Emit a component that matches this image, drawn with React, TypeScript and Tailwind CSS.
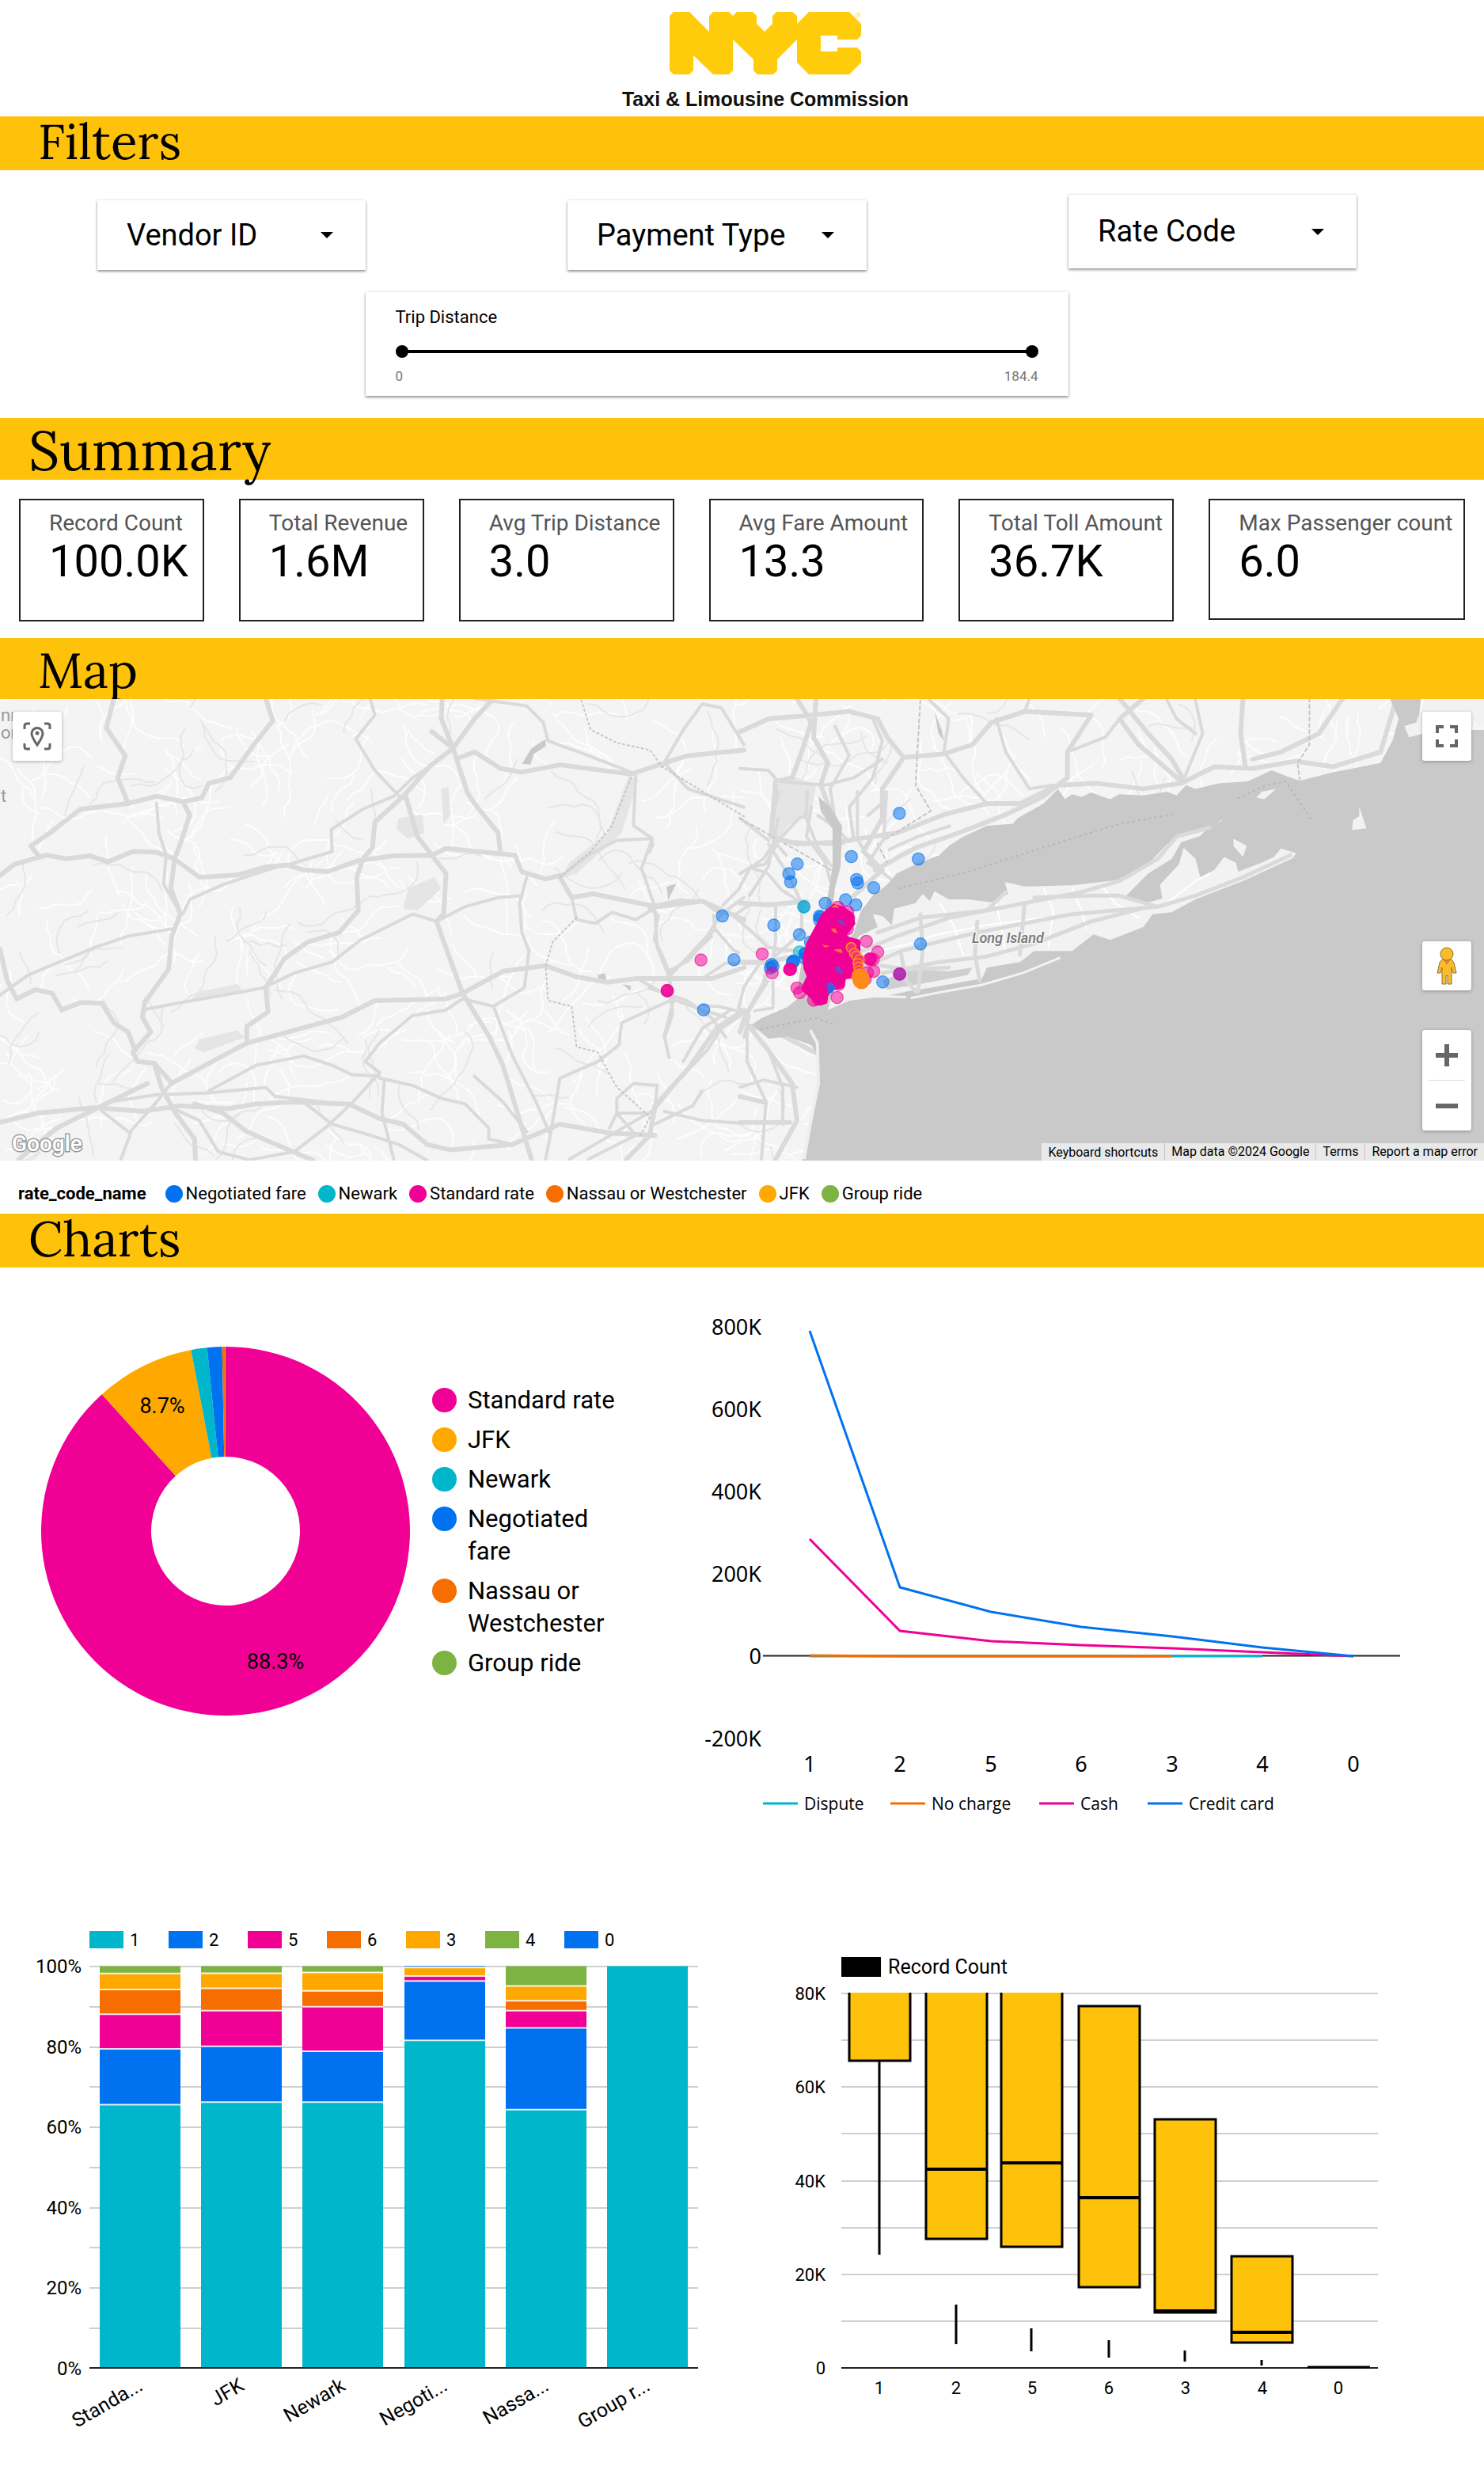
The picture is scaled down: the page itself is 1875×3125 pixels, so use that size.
import React, { useState } from "react";

const BLUE = "#0072f0";
const TEAL = "#00b6cb";
const PINK = "#f10096";
const ORANGE = "#f66d00";
const AMBER = "#ffa800";
const GREEN = "#7cb342";
const YELLOW = "#ffc20a";

function Logo() {
  return (
    <div className="flex h-[147px] flex-col items-center pt-[15px] pl-[59px]">
      <svg viewBox="0 0 242 79" className="h-[79px] w-[242px]" role="img" aria-label="NYC">
        <path
          fill="#ffcc0c"
          d="M5 0H25L50 25V5L55 0H75L80 5L85 0H105L110 5V15L120 25L130 15V5L135 0H155L161 5V15L176 0H227L242 15V30L237 35H212V30H191V50H212V45H237L242 50V64L227 79H176L161 64V35L136 60V74L131 79H111L106 74V60L80 35V74L75 79H55L30 55V74L25 79H5L0 74V5Z"
        />
        <circle cx="238" cy="4" r="3" fill="none" stroke="#ffdc5c" strokeWidth="1" />
        <circle cx="238" cy="4" r="1" fill="#ffdc5c" />
      </svg>
      <p className="mt-[15px] font-['Liberation_Sans',sans-serif] text-[25px] leading-[32px] font-bold text-[#111]">
        Taxi &amp; Limousine Commission
      </p>
    </div>
  );
}

function Filter({ label, className }: { label: string; className: string }) {
  return (
    <div className={"relative bg-white shadow-[0_2px_3px_rgba(0,0,0,0.38),0_0_3px_rgba(0,0,0,0.14)] " + className}>
      <select
        aria-label={label}
        className="h-full w-full appearance-none bg-transparent pr-16 pl-[37px] text-[38px] text-black"
      >
        <option>{label}</option>
      </select>
      <svg viewBox="0 0 16 8" className="pointer-events-none absolute top-1/2 right-[41px] -mt-1 h-2 w-4">
        <path d="M0 0H16L8 8Z" />
      </svg>
    </div>
  );
}

const RANGE =
  "pointer-events-none absolute inset-0 h-4 w-full appearance-none bg-transparent [&::-webkit-slider-thumb]:pointer-events-auto [&::-webkit-slider-thumb]:h-4 [&::-webkit-slider-thumb]:w-4 [&::-webkit-slider-thumb]:appearance-none [&::-webkit-slider-thumb]:rounded-full [&::-webkit-slider-thumb]:bg-black";

function TripDistance() {
  const [low, setLow] = useState(0);
  const [high, setHigh] = useState(184.4);
  return (
    <fieldset className="h-[131px] w-[888px] bg-white px-[38px] pt-5 shadow-[0_2px_3px_rgba(0,0,0,0.38),0_0_3px_rgba(0,0,0,0.14)]">
      <p className="text-[22px] leading-[24px]">Trip Distance</p>
      <div className="relative mt-[23px] h-4">
        <div className="absolute inset-x-2 top-[6px] h-1 bg-black" />
        <input
          type="range"
          aria-label="Minimum trip distance"
          min={0}
          max={184.4}
          step={0.1}
          value={low}
          onChange={(e) => setLow(Math.min(Number(e.target.value), high))}
          className={RANGE}
        />
        <input
          type="range"
          aria-label="Maximum trip distance"
          min={0}
          max={184.4}
          step={0.1}
          value={high}
          onChange={(e) => setHigh(Math.max(Number(e.target.value), low))}
          className={RANGE}
        />
      </div>
      <div className="mt-[13px] flex justify-between text-[17px] leading-[20px] text-[#757575]">
        <span>{low}</span>
        <span>{high}</span>
      </div>
    </fieldset>
  );
}

function Card({ label, value, short }: { label: string; value: string; short?: boolean }) {
  return (
    <div className={"border-2 border-[#222] pt-[13px] pl-[36px] " + (short ? "h-[153px]" : "h-[155px]")}>
      <p className="text-[28px] leading-[32px] whitespace-nowrap text-[#555]">{label}</p>
      <p className="text-[56px] leading-[64px]">{value}</p>
    </div>
  );
}

function Band({ title, className }: { title: string; className: string }) {
  return (
    <h2 className={"flex items-center bg-[#ffc20a] font-['Lora','Liberation_Serif',serif] leading-none " + className}>
      {title}
    </h2>
  );
}

/* ---------- Map ---------- */

const WEST_MAJOR = [
  "M240 5L224 85L264 160L248 220L270 290",
  "M0 485L30 455L98 430L140 440L190 432L228 448L280 420L330 422L368 440L420 490L500 484L560 462L605 457L640 470L690 475L755 445L830 432L910 430L940 412L1085 430L1100 475L1150 495L1180 485",
  "M65 405L80 430M65 405L110 365L170 305L270 290L330 270L385 285L400 320L380 400L368 440",
  "M368 440L360 520L380 590L362 650L355 740L305 830L300 870L318 910L280 965L290 990L325 995L360 1045",
  "M385 285L425 275L440 235L485 220L535 130L575 65L560 5",
  "M0 685L15 770L35 820L75 795L110 805L130 850L170 830L215 832L240 885L270 910L285 960",
  "M0 1155L80 1130L200 1115L300 1125L380 1110L480 1118L540 1105L620 1100L735 1105L800 1145L850 1160L900 1215L950 1230L1080 1215L1180 1160L1290 1185L1380 1190",
  "M360 1050L440 995L520 940L620 905L720 870L790 825L940 820L975 805L1060 745L1150 730L1215 760L1280 775L1340 765L1500 765L1568 735",
  "M520 940L520 895L565 855L560 790L600 710L650 665L715 640L755 580L752 490L765 440L785 410L790 340L850 270L905 190L955 140L930 60L932 5",
  "M855 270L880 380L910 430L940 480L935 590L920 610L945 700L975 805L1030 920L1060 1000L1100 1170L1120 1255",
  "M910 95L955 140L985 260L1000 290L1050 370L1055 425",
  "M955 140L1000 60L1040 5",
  "M970 165L1000 150L1055 195L1100 205L1180 185L1330 210L1400 180L1450 160L1568 145",
  "M1180 490L1205 545L1250 535L1385 570L1480 555L1568 605",
  "M1568 850L1510 900L1450 1010L1380 1110L1370 1190L1320 1255",
  "M410 1105L470 1130L520 1180L600 1225L660 1258",
  "M310 1050L215 1110L120 1170L40 1255",
  "M325 995L340 1060L370 1130L410 1200L412 1255",
];

const WEST_MINOR = [
  "M330 290L335 370L350 430L345 510L375 575",
  "M700 420L698 360L765 305L830 270L870 220L905 190",
  "M605 457L700 420",
  "M780 5L790 50L750 115L790 200L845 275",
  "M975 820L1040 840L1080 975L1130 1100L1160 1190L1150 1255",
  "M1340 210L1335 350L1375 385L1352 465L1380 570L1385 680L1410 760L1420 820L1400 920L1410 980",
  "M1205 545L1215 605L1255 615L1290 585L1340 605L1385 570",
  "M1110 490L1095 560L1100 640L1115 690L1105 790L1040 840",
  "M920 610L980 570L1050 545L1100 540",
  "M555 790L620 750L700 720L760 660L870 590L920 610",
  "M975 820L940 850L870 865L800 940L770 990L800 1020L740 1105L690 1165L620 1235L520 1258",
  "M800 1035L870 1055L930 1090L980 1105L1030 1170L1030 1200L1080 1215",
  "M300 850L380 830L450 815L555 790",
  "M0 810L60 755L200 680L270 650L362 630",
  "M385 590L400 550L470 510L540 480L600 455",
  "M1415 820L1480 850L1530 870",
  "M1410 760L1490 650L1520 590L1568 545",
  "M1420 820L1310 885L1305 945L1260 990L1180 1035L1160 1190",
  "M1300 1130L1300 1090L1335 1050L1385 1055L1380 1130L1300 1130L1285 1170",
  "M1400 1125L1480 1150L1568 1158",
  "M1395 190L1440 90L1480 20L1520 30L1568 130",
  "M1000 5L1110 25L1145 70L1155 120L1240 160L1330 205",
  "M1180 490L1240 430L1300 390L1375 385",
  "M230 1100L330 1080L440 1075L560 1060L580 1085L720 1105",
  "M440 1070L540 1000L640 975L700 1000L740 1025L800 1030",
  "M215 1125L275 1185L255 1255",
  "M275 1180L330 1100L360 1050",
  "M370 1120L420 1150L460 1235L520 1255",
  "M1400 180L1450 250L1568 300",
  "M1350 770L1420 820M1410 750L1450 710L1500 650",
  "M1300 1130L1340 1190L1240 1255M1200 1255L1380 1120L1430 1040L1490 960L1520 900",
  "M1000 1030L1060 1100L1110 1180M810 1040L805 1130L830 1255",
  "M640 1100L700 1160L780 1190L840 1215L900 1258",
  "M1480 1070L1460 1110L1380 1160M1440 990L1480 900L1540 850",
];

const EAST_MAJOR = [
  "M0 95L60 60L150 50L230 40L290 60L310 110L345 165L430 155L490 130L530 70L600 40L740 50",
  "M160 5L155 110L185 180L170 240L200 340",
  "M120 5L150 70L130 150L110 220L75 230L65 380L120 400L200 395",
  "M200 395L330 370L430 320L520 290L590 290L670 240L750 235L850 250L930 235L1000 190L1080 195L1170 175L1250 190L1350 150L1380 20",
  "M285 470L370 410L460 370L560 320L640 270L690 220L690 150L740 50",
  "M345 165L300 250L300 330L260 420L300 470L240 540",
  "M850 5L800 60L840 130L930 230",
  "M800 5L860 100L910 170L935 225",
  "M1060 5L1055 100L1065 190",
  "M1270 5L1220 100L1140 150L1080 170",
  "M0 560L60 565L140 555",
  "M0 720L60 720L130 700",
  "M10 880L60 960L110 1050L120 1150L75 1255",
  "M15 890L90 920L165 970",
  "M0 1085L50 1100",
  "M0 1155L105 1155",
  "M0 910L10 870L50 780L60 720",
];

const EAST_MINOR = [
  "M0 195L60 200L80 230L180 240L240 220L300 170",
  "M200 80L230 160L190 250L200 330",
  "M280 60L300 120L280 220L230 300L240 390",
  "M60 400L100 480L130 560L130 640L60 720",
  "M150 300L140 380L180 450L190 500",
  "M400 10L440 60L430 150L470 220L520 290",
  "M540 60L560 150L610 250L660 240",
  "M960 10L975 100L935 225",
  "M0 330L60 390M0 480L50 440L70 400",
  "M600 40L610 5M690 150L770 110L800 60",
  "M900 10L920 60L960 100",
  "M15 890L15 990L55 1100L45 1255",
  "M60 960L90 1060L90 1160",
  "M0 1060L50 1040L120 1060",
  "M80 330L60 460L20 540",
];

const METRO_ROADS = [
  "M0 435L120 410L210 420L250 450L320 470L380 430L450 425L560 420",
  "M0 170L15 200L0 230",
  "M280 430L340 370L385 285L440 275L490 190L465 130L490 0",
  "M490 185L560 190L680 200L740 195",
  "M600 0L595 100L640 210L690 280",
  "M595 90L570 100L480 195L520 240",
  "M790 0L790 180L850 280L930 340",
  "M900 0L890 180L830 270L870 300",
  "M830 90L900 30M640 90L700 130L760 190",
  "M910 220L940 205L1020 170L1140 130",
  "M245 470L250 520L150 640L75 680L80 770L90 840L60 930",
  "M250 520L320 600L340 610",
  "M0 440L35 470L20 560L50 620L75 680",
  "M0 710L200 710L290 650L420 650L480 650",
  "M320 470L400 540L450 590L600 610",
  "M390 290L450 310L500 370L560 410",
  "M480 440L480 560L470 640L440 700",
  "M420 650L360 740L340 820L380 850L360 930",
  "M0 745L140 790L200 830L240 860L290 930",
  "M200 810L270 815L370 840L450 720",
  "M370 830L330 860L240 920M400 830L470 820L470 720",
];

const ISLAND_ROADS = [
  "M240 700L330 650L440 600L600 560L720 530L800 500L880 440L920 380L990 355",
  "M250 740L340 690L500 640L700 590L880 570L960 540L1060 490L1160 430",
  "M300 750L420 720L520 705L620 670L740 610L860 570",
  "M290 640L380 600L520 580L560 530",
  "M380 590L385 690L375 800",
  "M500 610L495 700L505 770",
  "M600 560L590 700",
  "M250 720L350 740L440 735",
  "M340 700L350 770L370 800",
  "M620 545L740 540L800 540L880 570",
];

/* Short winding local streets, the same on every render. */
function localStreets(count: number, width: number, height: number, seed: number) {
  let s = seed;
  const rnd = () => {
    s = (s * 16807) % 2147483647;
    return s / 2147483647;
  };
  const out: string[] = [];
  for (let i = 0; i < count; i++) {
    let x = rnd() * width;
    let y = rnd() * height;
    let a = rnd() * Math.PI * 2;
    let d = "M" + x.toFixed(0) + " " + y.toFixed(0);
    const steps = 4 + Math.floor(rnd() * 8);
    for (let k = 0; k < steps; k++) {
      a += (rnd() - 0.5) * 1.3;
      x += Math.cos(a) * 11;
      y += Math.sin(a) * 11;
      d += "L" + x.toFixed(0) + " " + y.toFixed(0);
    }
    out.push(d);
  }
  return out.join("");
}

const STREETS = localStreets(520, 1875, 583, 77);
const LANES = localStreets(110, 1500, 583, 4242);

const FARES: [number, number, string][] = [
  [949, 82, BLUE], [767, 246, BLUE], [1021, 255, BLUE], [562, 274, BLUE], [530, 311, BLUE],
  [537, 342, BLUE], [787, 333, BLUE], [791, 346, BLUE], [852, 364, BLUE], [745, 410, BLUE],
  [784, 429, BLUE], [668, 423, BLUE], [587, 436, BLUE], [587, 436, TEAL], [278, 471, BLUE],
  [473, 506, BLUE], [570, 542, BLUE], [646, 472, BLUE], [646, 486, BLUE], [650, 475, BLUE],
  [612, 570, BLUE], [570, 608, TEAL], [590, 615, BLUE], [594, 612, BLUE], [592, 632, BLUE],
  [322, 637, BLUE], [465, 655, BLUE], [470, 662, BLUE], [460, 668, BLUE], [543, 647, BLUE],
  [546, 645, BLUE], [548, 642, BLUE], [1029, 577, BLUE], [886, 721, BLUE], [207, 827, BLUE],
  [429, 615, PINK], [197, 638, PINK], [69, 754, PINK], [69, 754, PINK], [69, 754, PINK],
  [467, 687, PINK], [535, 672, PINK], [533, 674, PINK], [537, 673, PINK], [534, 674, PINK],
  [561, 744, PINK], [571, 762, PINK], [713, 780, PINK], [824, 567, PINK], [867, 608, PINK],
  [840, 634, PINK], [836, 634, PINK], [838, 636, PINK], [850, 636, PINK], [852, 681, PINK],
  [828, 686, PINK], [820, 710, PINK], [716, 438, PINK], [753, 456, PINK], [757, 478, PINK],
  [752, 520, PINK], [720, 730, PINK], [624, 790, PINK], [640, 786, PINK], [650, 786, PINK],
  [950, 691, PINK], [950, 691, BLUE], [950, 691, PINK],
];

const QUEENS: [number, number][] = [
  [766, 590], [778, 612], [786, 622], [798, 636], [792, 650], [794, 664], [796, 678], [800, 690],
  [798, 700], [806, 706], [802, 714], [806, 718], [804, 716],
];

function MapCanvas() {
  return (
    <svg
      viewBox="0 0 1875 583"
      preserveAspectRatio="xMidYMid slice"
      className="absolute inset-0 h-full w-full font-['Roboto',sans-serif] [&_path]:[vector-effect:non-scaling-stroke]"
      role="img"
      aria-label="Map of trips around New York City"
    >
      <rect width="1875" height="583" fill="#f4f4f4" />
      <g fill="none" strokeLinejoin="round" strokeLinecap="round">
        <path d={STREETS} stroke="#fdfdfd" strokeWidth="2" />
        <path d={LANES} stroke="#e6e6e6" strokeWidth="2" />
      </g>
      <g transform="translate(0 -3) scale(0.5995 0.4655)">
        <g fill="#e5e5e5">
          <path d="M1325 215L1345 225L1310 370L1215 480L1180 495L1200 450L1280 370Z" />
          <path d="M840 330L890 320L895 370L860 385L835 360Z" />
          <path d="M860 520L915 490L930 520L880 580L850 575Z" />
          <path d="M400 825L420 800L500 780L515 805Z" />
          <path d="M410 955L420 930L500 905L515 925L430 965Z" />
          <path d="M930 250L945 245L950 320L935 345Z" />
        </g>
        <g fill="#c9c9c9">
          <path d="M1100 182L1120 140L1150 115L1150 135L1125 155L1118 185Z" />
          <path d="M1405 515L1425 508L1408 552Z" />
          <path d="M1260 755L1275 750L1278 770L1262 768Z" />
          <path d="M1312 780L1330 785L1328 798Z" />
        </g>
        <g fill="none" stroke="#dadada" strokeLinejoin="round" strokeLinecap="round">
          <path d={WEST_MINOR.join("")} strokeWidth="4" />
          <path d={WEST_MAJOR.join("")} strokeWidth="6" />
          <path
            d="M1225 10L1245 90L1300 125L1370 145L1395 190L1568 325M1330 220L1290 350L1245 420L1180 490M1215 600L1165 665L1150 730L1155 825L1205 840L1215 950L1260 965L1300 1060L1370 1140L1350 1190"
            stroke="#c6c6c6"
            strokeWidth="2"
            strokeDasharray="2 4"
          />
        </g>
      </g>
      <g transform="translate(935 -3) scale(0.5995 0.4655)">
        <path d="M75 240L110 215L160 240L150 320L100 350L80 390L68 370Z" fill="#e5e5e5" />
        <g fill="none" stroke="#dadada" strokeLinejoin="round" strokeLinecap="round">
          <path d={EAST_MINOR.join("")} strokeWidth="4" />
          <path d={EAST_MAJOR.join("")} strokeWidth="6" />
          <path
            d="M380 10L370 240L402 310L290 400L310 450M0 330L110 410L205 480M1200 5L1200 130L1175 180L1180 225"
            stroke="#c6c6c6"
            strokeWidth="2"
            strokeDasharray="4 4"
          />
        </g>
      </g>
      <g transform="translate(820 117) scale(0.3333)" fill="none" stroke="#dadada" strokeLinejoin="round" strokeLinecap="round">
        <path d={METRO_ROADS.join("")} strokeWidth="4" />
      </g>
      <g transform="translate(935 -3) scale(0.5995 0.4655)">
        <g fill="#c9c9c9">
          <path d="M165 270L190 300L215 350L212 460L200 520L190 640L150 760L120 800L130 720L175 620L195 460L195 360L170 310Z" />
          <path d="M410 40L425 90L430 120L418 100Z" />
          <path d="M1370 5L1435 5L1430 70L1470 90L1568 90L1568 1262L130 1262L150 1160L168 1050L165 975L150 945L100 922L60 928L25 890L45 872L100 842L140 800L150 760L200 700L240 640L255 580L280 540L310 510L330 480L370 455L420 430L440 405L470 380L520 350L575 345L585 330L640 290L670 250L685 278L700 265L720 272L740 260L780 278L800 265L850 268L900 258L920 268L940 240L960 250L1010 235L1070 230L1120 200L1150 215L1180 228L1250 205L1350 180L1375 120L1388 60Z" />
        </g>
        <g fill="#f2f2f2">
          <path d="M1445 5H1568V75L1530 60L1500 90L1440 100L1410 110L1400 80L1425 70Z" />
          <path d="M235 700L250 650L290 625L280 590L300 595L320 620L325 575L370 560L385 535L400 555L410 528L440 550L480 550L530 558L565 535L558 503L600 515L700 512L780 500L820 492L860 455L900 400L950 365L990 350L970 378L930 395L910 440L860 480L810 545L850 562L890 548L885 510L925 455L935 410L960 440L970 490L1000 470L1020 435L1045 450L1050 475L1100 450L1125 435L1140 412L1172 425L1165 438L1060 500L960 550L910 585L870 590L850 625L780 660L745 645L700 690L620 690L590 720L520 735L510 765L400 790L350 800L310 812L230 825L185 850L200 780Z" />
          <path d="M1305 298L1312 325L1320 357L1290 362L1292 335L1305 325Z" />
          <path d="M1130 250L1105 278L1088 274L1100 258Z" />
          <path d="M1040 385L1068 405L1060 435L1040 405Z" />
          <path d="M1020 332L1005 345L1012 336Z" />
        </g>
        <path d="M675 708L600 748L510 782L430 800L360 818M350 815L275 812" fill="none" stroke="#f2f2f2" strokeWidth="3" />
        <path d="M148 905L163 940L165 1050L148 1160L135 1255" fill="none" stroke="#eeeeee" strokeWidth="4" />
        <path d="M300 770L360 740L440 745L490 735L480 755L400 775L310 795Z" fill="#cfcfcf" />
        <g fill="none" strokeLinejoin="round" strokeLinecap="round">
          <path
            d="M290 690L360 670L430 640M420 560L450 620L470 700M540 560L550 620L560 700M640 520L660 580L650 680M700 520L720 580L730 630M760 510L790 560L840 600M900 560L960 500L990 480M400 650L520 620L640 600"
            stroke="#ffffff"
            strokeWidth="2"
          />
          <path d={ISLAND_ROADS.join("")} stroke="#dadada" strokeWidth="5" />
          <path
            d="M335 520L480 475L650 405L800 345L915 318M1050 275L1110 240L1150 230L1205 335M45 902L160 872L200 890"
            stroke="#b4b4b4"
            strokeWidth="2"
            strokeDasharray="1 6"
          />
        </g>
      </g>
      <g fill="#9a9a9a" fontSize="22">
        <text x="1" y="28">nn</text>
        <text x="1" y="50">ore</text>
        <text x="1" y="130">t</text>
      </g>
      <g transform="translate(820 117) scale(0.3333)">
        {FARES.map(([x, y, c], i) => (
          <circle key={i} cx={x} cy={y} r="23" fill={c} fillOpacity="0.52" stroke={c} strokeOpacity="0.6" strokeWidth="4" />
        ))}
        <path
          fill={PINK}
          stroke={PINK}
          strokeWidth="4"
          strokeLinejoin="round"
          d="M700 432L735 440L770 468L776 500L742 545L757 556L795 566L796 600L778 620L774 660L788 700L742 705L734 738L692 748L674 772L670 798L640 804L616 778L584 750L590 730L604 700L592 670L588 630L602 575L632 520L660 465Z"
        />
        <path d="M660 735L690 722L710 740L695 762L675 763Z" fill="#3f5fe0" />
        <path d="M705 665L720 660L738 690L712 685ZM712 485L735 488L745 510L725 498ZM640 735L650 720L672 730Z" fill="#7048d0" />
        <path
          d="M690 438L708 428L722 440ZM690 520L705 518L716 536L698 532ZM655 580L685 585L668 590ZM700 598L728 596L734 612L712 606ZM755 580L780 590L784 606L764 596Z"
          fill="#ff7a30"
        />
        {QUEENS.map(([x, y], i) => (
          <circle
            key={i}
            cx={x}
            cy={y}
            r={i > 7 ? 28 : 18}
            fill={i > 7 ? "#ff8a1c" : "#f2307a"}
            stroke="#ff8a1c"
            strokeWidth="5"
          />
        ))}
        <circle cx="650" cy="750" r="28" fill={PINK} />
      </g>
      <text x="1228" y="308" fontSize="18" fontStyle="italic" fontWeight="500" fill="#777" stroke="#f4f4f4" strokeWidth="3" paintOrder="stroke">
        Long Island
      </text>
      <text x="15" y="571" fontSize="28" fontWeight="500" fill="#fff" stroke="#9a9a9a" strokeWidth="3" paintOrder="stroke">
        Google
      </text>
    </svg>
  );
}

const CONTROL = "flex w-[62px] items-center justify-center rounded-[3px] bg-white shadow-[0_1px_4px_rgba(0,0,0,0.3)]";

function TripMap() {
  return (
    <section className="relative h-[583px] overflow-hidden">
      <MapCanvas />
      <button type="button" aria-label="Locate" className={"absolute top-[16px] left-[16px] h-[62px] " + CONTROL}>
        <svg viewBox="0 0 36 36" className="h-9 w-9" fill="none" stroke="#666" strokeWidth="3">
          <path d="M2 9V5Q2 2 5 2H9M27 2H31Q34 2 34 5V9M34 27V31Q34 34 31 34H27M9 34H5Q2 34 2 31V27" />
          <path d="M18 29C14 23 11 19 11 14.500A7 7 0 0 1 25 14.500C25 19 22 23 18 29Z" />
          <circle cx="18" cy="14" r="2.500" fill="#666" stroke="none" />
        </svg>
      </button>
      <div className="absolute top-[16px] right-[16px] flex flex-col items-center">
        <button type="button" aria-label="Full screen" className={"h-[62px] " + CONTROL}>
          <svg viewBox="0 0 28 28" className="h-7 w-7" fill="none" stroke="#666" strokeWidth="4">
            <path d="M2 10V2H10M18 2H26V10M26 18V26H18M10 26H2V18" />
          </svg>
        </button>
        <button type="button" aria-label="Street View" className={"mt-[228px] h-[62px] " + CONTROL}>
          <svg viewBox="0 0 26 48" className="h-12 w-[26px]" stroke="#8b6f3a" strokeWidth="1">
            <path d="M7 16H19L22 20L25 33H21L19 26V47H14V36H12V47H7V26L5 33H1L4 20Z" fill="#fbbc2c" />
            <path d="M8 16H18L13 23Z" fill="#e9812c" stroke="none" />
            <circle cx="13" cy="9" r="8" fill="#fbbc2c" />
          </svg>
        </button>
        <div className="mt-[50px] w-[62px] rounded-[3px] bg-white shadow-[0_1px_4px_rgba(0,0,0,0.3)]">
          <button type="button" aria-label="Zoom in" className="flex h-[63px] w-full items-center justify-center">
            <svg viewBox="0 0 28 28" className="h-7 w-7">
              <path d="M11 0H17V11H28V17H17V28H11V17H0V11H11Z" fill="#666" />
            </svg>
          </button>
          <div className="mx-2 h-px bg-[#ddd]" />
          <button type="button" aria-label="Zoom out" className="flex h-[63px] w-full items-center justify-center">
            <svg viewBox="0 0 28 6" className="h-[6px] w-7">
              <path d="M0 0H28V6H0Z" fill="#666" />
            </svg>
          </button>
        </div>
      </div>
      <div className="absolute right-0 bottom-0 flex h-[22px] divide-x divide-[#c4c4c4] bg-[#e9e9e9] text-[16px] leading-[21px]">
        <button type="button" className="px-2">Keyboard shortcuts</button>
        <span className="px-2">Map data ©2024 Google</span>
        <a href="#terms" className="px-2">Terms</a>
        <a href="#report" className="px-2">Report a map error</a>
      </div>
    </section>
  );
}

const MAP_LEGEND = [
  { name: "Negotiated fare", color: BLUE },
  { name: "Newark", color: TEAL },
  { name: "Standard rate", color: PINK },
  { name: "Nassau or Westchester", color: ORANGE },
  { name: "JFK", color: AMBER },
  { name: "Group ride", color: GREEN },
];

/* ---------- Charts ---------- */

const SLICES = [
  { name: "Standard rate", value: 88.3, color: PINK },
  { name: "JFK", value: 8.7, color: AMBER },
  { name: "Newark", value: 1.4, color: TEAL },
  { name: "Negotiated fare", value: 1.3, color: BLUE },
  { name: "Nassau or Westchester", value: 0.27, color: ORANGE },
  { name: "Group ride", value: 0.03, color: GREEN },
];

function Donut() {
  const c = 233;
  const inner = 94;
  let acc = 0;
  const pt = (t: number, r: number) => {
    const a = (t / 100) * Math.PI * 2;
    return (c + Math.sin(a) * r).toFixed(2) + " " + (c - Math.cos(a) * r).toFixed(2);
  };
  return (
    <div className="flex items-center gap-[28px] pl-[52px]">
      <svg viewBox="0 0 466 466" className="w-[466px] shrink-0 text-[27px]" role="img" aria-label="Trips by rate code">
        {SLICES.map((s) => {
          const a = acc;
          const b = (acc += s.value);
          const large = s.value > 50 ? 1 : 0;
          return (
            <path
              key={s.name}
              fill={s.color}
              d={`M${pt(a, c)}A${c} ${c} 0 ${large} 1 ${pt(b, c)}L${pt(b, inner)}A${inner} ${inner} 0 ${large} 0 ${pt(a, inner)}Z`}
            />
          );
        })}
        <text x="153" y="84" textAnchor="middle">8.7%</text>
        <text x="296" y="407" textAnchor="middle">88.3%</text>
      </svg>
      <ul className="flex flex-col gap-[9px] text-[31px] leading-[41px]">
        {SLICES.map((s) => (
          <li key={s.name} className="flex items-start gap-[14px]">
            <span className="mt-[5px] h-[31px] w-[31px] shrink-0 rounded-full" style={{ background: s.color }} />
            <span className="max-w-[200px]">{s.name}</span>
          </li>
        ))}
      </ul>
    </div>
  );
}

const LINE_X = [1023, 1137, 1252, 1366, 1481, 1595, 1710];

function LineChart() {
  const series = [
    { name: "Dispute", color: TEAL, x: 964, y: [2092, 2092, 2092, 2092, 2092, 2092] },
    { name: "No charge", color: ORANGE, x: 1125, y: [2091, 2092, 2092, 2092, 2092] },
    { name: "Cash", color: PINK, x: 1313, y: [1944, 2060, 2073, 2078, 2082, 2087, 2092] },
    { name: "Credit card", color: BLUE, x: 1450, y: [1681, 2005, 2036, 2055, 2067, 2081, 2092] },
  ];
  return (
    <svg viewBox="880 1601 995 739" className="w-full font-['Noto_Sans',sans-serif] text-[27px]" role="img" aria-label="Totals by payment type">
      {["800K", "600K", "400K", "200K", "0", "-200K"].map((t, i) => (
        <text key={t} x="962" y={1686 + i * 104} textAnchor="end">{t}</text>
      ))}
      {["1", "2", "5", "6", "3", "4", "0"].map((t, i) => (
        <text key={t} x={LINE_X[i]} y="2238" textAnchor="middle">{t}</text>
      ))}
      <path d="M964 2091.500H1769" stroke="#222" strokeWidth="2" />
      {series.map((s) => (
        <g key={s.name}>
          <polyline
            points={s.y.map((y, i) => LINE_X[i] + "," + y).join(" ")}
            fill="none"
            stroke={s.color}
            strokeWidth="3"
          />
          <path d={`M${s.x} 2278H${s.x + 44}`} stroke={s.color} strokeWidth="3" />
          <text x={s.x + 52} y="2286" className="font-['Open_Sans',sans-serif] text-[21px]">{s.name}</text>
        </g>
      ))}
    </svg>
  );
}

const RATE_BARS: { name: string; parts: [string, number, number][] }[] = [
  { name: "Standa...", parts: [[GREEN, 187, 208], [AMBER, 208, 253], [ORANGE, 253, 323], [PINK, 323, 421], [BLUE, 421, 579], [TEAL, 579, 1324]] },
  { name: "JFK", parts: [[GREEN, 187, 207], [AMBER, 207, 250], [ORANGE, 250, 313], [PINK, 313, 414], [BLUE, 414, 572], [TEAL, 572, 1324]] },
  { name: "Newark", parts: [[GREEN, 187, 205], [AMBER, 205, 257], [ORANGE, 257, 302], [PINK, 302, 428], [BLUE, 428, 572], [TEAL, 572, 1324]] },
  { name: "Negoti...", parts: [[BLUE, 187, 191], [AMBER, 191, 215], [PINK, 215, 229], [BLUE, 229, 397], [TEAL, 397, 1324]] },
  { name: "Nassa...", parts: [[GREEN, 187, 243], [AMBER, 243, 285], [ORANGE, 285, 313], [PINK, 313, 362], [BLUE, 362, 593], [TEAL, 593, 1324]] },
  { name: "Group r...", parts: [[TEAL, 187, 1324]] },
];

function StackedBars() {
  const legend: [string, string][] = [["1", TEAL], ["2", BLUE], ["5", PINK], ["6", ORANGE], ["3", AMBER], ["4", GREEN], ["0", BLUE]];
  const toY = (v: number) => 2400 + v / 2.24;
  return (
    <svg viewBox="0 2340 940 785" className="w-full text-[24px]" role="img" aria-label="Passenger count share by rate code">
      {legend.map(([t, c], i) => (
        <g key={t}>
          <rect x={113 + i * 100} y="2439" width="43" height="22" fill={c} />
          <text x={164 + i * 100} y="2458" className="text-[22px]">{t}</text>
        </g>
      ))}
      {Array.from({ length: 10 }, (_, i) => (
        <path key={i} d={`M113 ${2484 + Math.round(i * 50.75)}H882`} stroke="#cfcfcf" strokeWidth="2" />
      ))}
      {["100%", "80%", "60%", "40%", "20%", "0%"].map((t, i) => (
        <text key={t} x="103" y={2492 + Math.round(i * 101.5)} textAnchor="end">{t}</text>
      ))}
      {RATE_BARS.map((b, i) => {
        const x = 126 + Math.round(i * 128.2);
        return (
          <g key={b.name}>
            {b.parts.map(([c, a, z], k) => (
              <rect key={k} x={x} y={toY(a)} width="102" height={toY(z) - toY(a)} fill={c} />
            ))}
            {b.parts.slice(1).map(([, a], k) => (
              <path key={k} d={`M${x} ${toY(a)}h102`} stroke="#fff" strokeOpacity="0.85" strokeWidth="2" />
            ))}
            <text transform={`translate(${x + 56} 3018) rotate(-30)`} textAnchor="end" className="text-[25px]">{b.name}</text>
          </g>
        );
      })}
      <path d="M113 2991H882" stroke="#222" strokeWidth="2" />
    </svg>
  );
}

function BoxPlot() {
  const boxes = [
    { x: 1073, top: 2500, bottom: 2603, mid: 0, w: [2603, 2848] },
    { x: 1170, top: 2500, bottom: 2828, mid: 2740, w: [2911, 2961] },
    { x: 1265, top: 2500, bottom: 2838, mid: 2732, w: [2941, 2970] },
    { x: 1363, top: 2534, bottom: 2889, mid: 2776, w: [2956, 2978] },
    { x: 1459, top: 2677, bottom: 2921, mid: 2919, w: [2969, 2983] },
    { x: 1556, top: 2850, bottom: 2959, mid: 2946, w: [2981, 2988] },
  ];
  return (
    <svg viewBox="940 2340 935 785" className="w-full text-[22px]" role="img" aria-label="Record count by passenger count">
      <clipPath id="plot">
        <rect x="1062" y="2517" width="680" height="480" />
      </clipPath>
      <rect x="1063" y="2472" width="50" height="25" />
      <text x="1122" y="2493" className="text-[25px]">Record Count</text>
      {Array.from({ length: 8 }, (_, i) => (
        <path key={i} d={`M1063 ${2518 + Math.round(i * 59.15)}H1741`} stroke="#cfcfcf" strokeWidth="2" />
      ))}
      {["80K", "60K", "40K", "20K", "0"].map((t, i) => (
        <text key={t} x="1043" y={2526 + Math.round(i * 118.3)} textAnchor="end">{t}</text>
      ))}
      {["1", "2", "5", "6", "3", "4", "0"].map((t, i) => (
        <text key={t} x={1111 + Math.round(i * 96.7)} y="3024" textAnchor="middle">{t}</text>
      ))}
      <path d="M1063 2991H1741" stroke="#222" strokeWidth="2" />
      <path d="M1652 2990H1731" stroke="#000" strokeWidth="3" />
      <g clipPath="url(#plot)" stroke="#000" strokeWidth="3">
        {boxes.map((b) => (
          <g key={b.x}>
            <path d={`M${b.x + 38} ${b.w[0]}V${b.w[1]}`} />
            <rect x={b.x} y={b.top} width="77" height={b.bottom - b.top} fill={YELLOW} />
            {b.mid > 0 && <path d={`M${b.x} ${b.mid}h77`} strokeWidth="4" />}
          </g>
        ))}
      </g>
    </svg>
  );
}

export default function App() {
  return (
    <main className="overflow-hidden bg-white font-['Roboto',sans-serif] text-black">
      <Logo />
      <Band title="Filters" className="h-[68px] pb-1 pl-[48px] text-[62px]" />
      <section className="pt-[31px] pb-7">
        <div className="flex h-[95px] items-end justify-between pr-[161px] pl-[123px]">
          <Filter label="Vendor ID" className="h-[88px] w-[339px]" />
          <Filter label="Payment Type" className="h-[88px] w-[378px]" />
          <Filter label="Rate Code" className="h-[93px] w-[364px] self-start" />
        </div>
        <div className="mt-7 flex justify-center pr-[64px]">
          <TripDistance />
        </div>
      </section>
      <Band title="Summary" className="h-[78px] pt-1 pl-[36px] text-[69px]" />
      <section className="grid grid-cols-[234fr_234fr_272fr_272fr_272fr_324fr] gap-11 px-6 pt-6 pb-[21px]">
        <Card label="Record Count" value="100.0K" />
        <Card label="Total Revenue" value="1.6M" />
        <Card label="Avg Trip Distance" value="3.0" />
        <Card label="Avg Fare Amount" value="13.3" />
        <Card label="Total Toll Amount" value="36.7K" />
        <Card label="Max Passenger count" value="6.0" short />
      </section>
      <Band title="Map" className="h-[77px] pt-1 pl-[48px] text-[62px]" />
      <TripMap />
      <div className="flex h-[67px] items-start gap-[15px] pt-[30px] pl-[23px] text-[22px] leading-6">
        <strong className="mr-[9px] font-bold">rate_code_name</strong>
        {MAP_LEGEND.map((l) => (
          <span key={l.name} className="flex items-center gap-1 whitespace-nowrap">
            <span className="h-[22px] w-[22px] rounded-full" style={{ background: l.color }} />
            {l.name}
          </span>
        ))}
      </div>
      <Band title="Charts" className="h-[68px] pb-1 pl-[36px] text-[62px]" />
      <section className="grid grid-cols-[880fr_995fr]">
        <div className="pt-[100px]">
          <Donut />
        </div>
        <LineChart />
      </section>
      <section className="grid grid-cols-[940fr_935fr]">
        <StackedBars />
        <BoxPlot />
      </section>
    </main>
  );
}
